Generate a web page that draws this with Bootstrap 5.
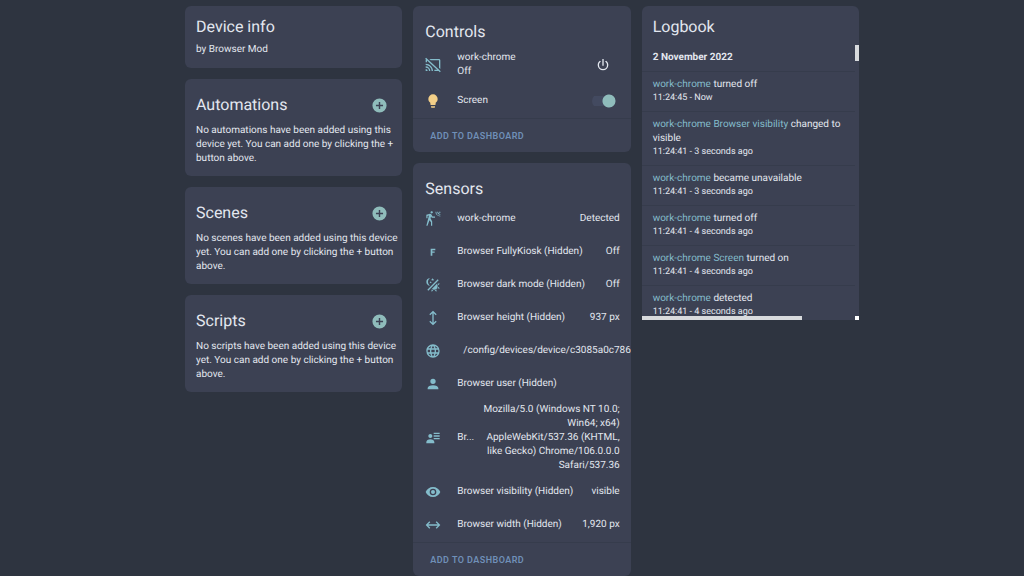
<!DOCTYPE html>
<html lang="en">
<head>
<meta charset="utf-8">
<meta name="viewport" content="width=device-width, initial-scale=1">
<title>Device info</title>
<link href="https://cdn.jsdelivr.net/npm/bootstrap@5.3.0/dist/css/bootstrap.min.css" rel="stylesheet">
<style>
  :root { --panel: #3c4153; --ink: #e3e7ef; --accent: #84bccb; --teal: #8fbcbb; --line: #363c4c; }
  body { background: #2e3440; color: var(--ink); font: 400 10px/14px Roboto, "Liberation Sans", sans-serif; text-rendering: geometricPrecision; }
  main { padding: 6px 0 0 20px; }
  .page { max-width: 674px; }
  .page > .row { --bs-gutter-x: 11px; --bs-gutter-y: 11px; }
  .stack { gap: 11px; }
  .panel { background: var(--panel); color: var(--ink); border: 0; border-radius: 6px; overflow: hidden; }
  .panel h2 { font-size: 16px; line-height: 20px; font-weight: 400; margin: 0; }
  .info { padding: 11px 12px 11px 11px; }
  .info p { margin: 6px 0 0; }
  .related { padding: 16px 3px 10px 11px; }
  .related p { margin: 9px 0 0; }
  .related header { padding-right: 11px; }
  .icon { width: 16px; height: 16px; flex: none; fill: currentColor; display: block; }
  .icon-btn { background: none; border: 0; padding: 0; color: inherit; }
  .add { color: var(--teal); }
  .add .icon { width: 17px; height: 17px; }
  .entities { padding: 16px 11px 3px 12px; }
  .entities h2 { margin-bottom: 6px; }
  .entities ul { gap: 5px; }
  .entities li { min-height: 28px; }
  .entities li.tall { min-height: 34px; }
  .entities li > .icon { color: var(--accent); margin-right: 16px; }
  .entities li > .lamp { color: #f3cf88; }
  .value { margin-left: 6px; white-space: nowrap; }
  .name { min-width: 0; }
  .agent { flex: 0 0 138px; white-space: normal; text-align: right; }
  .power { margin-right: 9px; }
  .form-switch.screen { min-height: 0; padding: 0; margin: 0 4px 0 0; }
  .form-switch.screen .form-check-input { width: 24px; height: 14px; margin: 0; float: none; border: 0; display: block; background-color: transparent;
    background-image: radial-gradient(circle at 17px 7px, var(--teal) 6px, transparent 7px), linear-gradient(#434a60, #434a60);
    background-size: 24px 14px, 18px 10px; background-position: 0 0, 0 2px; background-repeat: no-repeat; border-radius: 7px; }
  .actions { border-top: 1px solid var(--line); padding: 10px 17px 9px; }
  .actions button { color: #7090b8; font-size: 9px; font-weight: 600; line-height: 14px; letter-spacing: .05em; text-transform: uppercase; }
  .logbook { max-height: 314px; padding: 11px 0 0 0; }
  .logbook.panel { border-bottom-left-radius: 0; border-bottom-right-radius: 0; }
  .logbook h2, .logbook h3 { padding-left: 11px; }
  .logbook h3 { font-size: 10px; line-height: 14px; font-weight: 700; margin: 14px 0 6px; }
  .logbook li { border-top: 1px solid var(--line); padding: 6px 8px 6px 11px; margin-right: 4px; }
  .logbook a { color: var(--accent); text-decoration: none; }
  .logbook time { display: block; font-size: 9px; line-height: 13px; }
  .bar-x, .bar-y, .bar-end { position: absolute; background: #d8dadd; }
  .bar-x { left: 0; bottom: 0; width: 74%; height: 4px; }
  .bar-y { right: 0; top: 39px; width: 4px; height: 16px; }
  .bar-end { right: 0; bottom: 0; width: 4px; height: 4px; background: #fff; }
</style>
</head>
<body>
<svg width="0" height="0" class="d-none" aria-hidden="true">
  <symbol id="plus" viewBox="0 0 24 24"><path d="M17,13H13V17H11V13H7V11H11V7H13V11H17M12,2A10,10 0 0,0 2,12A10,10 0 0,0 12,22A10,10 0 0,0 22,12A10,10 0 0,0 12,2Z"/></symbol>
</svg>
<main>
<div class="page mx-auto">
  <div class="row">
    <div class="col-12 col-md-4 d-flex flex-column stack">
      <section class="card panel info">
        <h2>Device info</h2>
        <p>by Browser Mod</p>
      </section>
      <section class="card panel related">
        <header class="d-flex justify-content-between align-items-center"><h2>Automations</h2><button class="icon-btn add" type="button" aria-label="Add automation"><svg class="icon"><use href="#plus"/></svg></button></header>
        <p>No automations have been added using this device yet. You can add one by clicking the + button above.</p>
      </section>
      <section class="card panel related">
        <header class="d-flex justify-content-between align-items-center"><h2>Scenes</h2><button class="icon-btn add" type="button" aria-label="Add scene"><svg class="icon"><use href="#plus"/></svg></button></header>
        <p>No scenes have been added using this device yet. You can add one by clicking the + button above.</p>
      </section>
      <section class="card panel related">
        <header class="d-flex justify-content-between align-items-center"><h2>Scripts</h2><button class="icon-btn add" type="button" aria-label="Add script"><svg class="icon"><use href="#plus"/></svg></button></header>
        <p>No scripts have been added using this device yet. You can add one by clicking the + button above.</p>
      </section>
    </div>

    <div class="col-12 col-md-4 d-flex flex-column stack">
      <section class="card panel">
        <div class="entities">
          <h2>Controls</h2>
          <ul class="list-unstyled d-flex flex-column mb-0">
            <li class="d-flex align-items-center tall">
              <svg class="icon" viewBox="0 0 24 24"><path d="M1.6,1.27L0.25,2.75L1.41,3.8C1.16,4.13 1,4.55 1,5V8H3V5.23L18.2,19H14V21H20.41L22.31,22.72L23.65,21.24M6.5,3L8.7,5H21V16.14L23,17.95V5C23,3.89 22.1,3 21,3M1,10V12A9,9 0 0,1 10,21H12C12,14.92 7.08,10 1,10M1,14V16A5,5 0 0,1 6,21H8A7,7 0 0,0 1,14M1,18V21H4A3,3 0 0,0 1,18Z"/></svg>
              <div class="name flex-grow-1">work-chrome<br>Off</div>
              <button class="icon-btn power" type="button" aria-label="Turn on work-chrome"><svg class="icon" viewBox="0 0 24 24"><path d="M16.56,5.44L15.11,6.89C16.84,7.94 18,9.83 18,12A6,6 0 0,1 12,18A6,6 0 0,1 6,12C6,9.83 7.16,7.94 8.88,6.88L7.44,5.44C5.36,6.88 4,9.28 4,12A8,8 0 0,0 12,20A8,8 0 0,0 20,12C20,9.28 18.64,6.88 16.56,5.44M13,3H11V13H13"/></svg></button>
            </li>
            <li class="d-flex align-items-center">
              <svg class="icon lamp" viewBox="0 0 24 24"><path d="M12,2A7,7 0 0,0 5,9C5,11.38 6.19,13.47 8,14.74V17A1,1 0 0,0 9,18H15A1,1 0 0,0 16,17V14.74C17.81,13.47 19,11.38 19,9A7,7 0 0,0 12,2M9,21A1,1 0 0,0 10,22H14A1,1 0 0,0 15,21V20H9V21Z"/></svg>
              <label class="name flex-grow-1" for="screen">Screen</label>
              <div class="form-check form-switch screen"><input class="form-check-input" type="checkbox" role="switch" id="screen" checked></div>
            </li>
          </ul>
        </div>
        <div class="actions d-flex"><button class="icon-btn" type="button">Add to dashboard</button></div>
      </section>

      <section class="card panel">
        <div class="entities">
          <h2>Sensors</h2>
          <ul class="list-unstyled d-flex flex-column mb-0">
            <li class="d-flex align-items-center">
              <svg class="icon" viewBox="0 0 24 24"><path d="M10,0.2C9,0.2 8.2,1 8.2,2C8.2,3 9,3.8 10,3.8C11,3.8 11.8,3 11.8,2C11.8,1 11,0.2 10,0.2M15.67,1A7.33,7.33 0 0,0 23,8.33V7A6,6 0 0,1 17,1H15.67M18.33,1C18.33,3.58 20.42,5.67 23,5.67V4.33C21.16,4.33 19.67,2.84 19.67,1H18.33M21,1A2,2 0 0,0 23,3V1H21M7.92,4.03C7.75,4.03 7.58,4.06 7.42,4.11L2,5.8V11H3.8V7.33L5.91,6.67L2,22H3.8L6.67,13.89L9,17V22H10.8V15.59L8.31,11.05L9.04,8.18L10.12,10H15V8.2H11.38L9.38,4.87C9.08,4.37 8.54,4.03 7.92,4.03Z"/></svg>
              <span class="name text-truncate flex-grow-1">work-chrome</span><span class="value">Detected</span>
            </li>
            <li class="d-flex align-items-center">
              <svg class="icon" viewBox="0 0 24 24"><path d="M8.5,7V17.5H11V13.3H14.5V11.1H11V9.2H15.5V7Z"/></svg>
              <span class="name text-truncate flex-grow-1">Browser FullyKiosk (Hidden)</span><span class="value">Off</span>
            </li>
            <li class="d-flex align-items-center">
              <svg class="icon" viewBox="0 0 24 24"><path d="M7.5,2C5.71,3.15 4.5,5.18 4.5,7.5C4.5,9.82 5.71,11.85 7.53,13C4.46,13 2,10.54 2,7.5A5.5,5.5 0 0,1 7.5,2M19.07,3.5L20.5,4.93L4.93,20.5L3.5,19.07L19.07,3.5M12.89,5.93L11.41,5L9.97,6L10.39,4.3L9,3.24L10.75,3.12L11.33,1.47L12,3.1L13.73,3.13L12.38,4.26L12.89,5.93M9.59,9.54L8.43,8.81L7.31,9.59L7.65,8.27L6.56,7.44L7.92,7.35L8.37,6.06L8.88,7.33L10.24,7.36L9.19,8.23L9.59,9.54M19,13.5A5.5,5.5 0 0,1 13.5,19C12.28,19 11.15,18.6 10.24,17.93L17.93,10.24C18.6,11.15 19,12.28 19,13.5M14.6,20.08L17.37,18.93L17.13,22.28L14.6,20.08M18.93,17.38L20.08,14.61L22.28,17.15L18.93,17.38M20.08,12.42L18.94,9.64L22.28,9.88L20.08,12.42M9.63,18.93L12.4,20.08L9.87,22.27L9.63,18.93Z"/></svg>
              <span class="name text-truncate flex-grow-1">Browser dark mode (Hidden)</span><span class="value">Off</span>
            </li>
            <li class="d-flex align-items-center">
              <svg class="icon" viewBox="0 0 24 24"><path d="M12,1L17.5,6.5L16.1,7.9L13,4.8V19.2L16.1,16.1L17.5,17.5L12,23L6.5,17.5L7.9,16.1L11,19.2V4.8L7.9,7.9L6.5,6.5Z"/></svg>
              <span class="name text-truncate flex-grow-1">Browser height (Hidden)</span><span class="value">937 px</span>
            </li>
            <li class="d-flex align-items-center">
              <svg class="icon" viewBox="0 0 24 24"><path d="M16.36,14C16.44,13.34 16.5,12.68 16.5,12C16.5,11.32 16.44,10.66 16.36,10H19.74C19.9,10.64 20,11.31 20,12C20,12.69 19.9,13.36 19.74,14M14.59,19.56C15.19,18.45 15.65,17.25 15.97,16H18.92C17.96,17.65 16.43,18.93 14.59,19.56M14.34,14H9.66C9.56,13.34 9.5,12.68 9.5,12C9.5,11.32 9.56,10.65 9.66,10H14.34C14.43,10.65 14.5,11.32 14.5,12C14.5,12.68 14.43,13.34 14.34,14M12,19.96C11.17,18.76 10.5,17.43 10.09,16H13.91C13.5,17.43 12.83,18.76 12,19.96M8,8H5.08C6.03,6.34 7.57,5.06 9.4,4.44C8.8,5.55 8.35,6.75 8,8M5.08,16H8C8.35,17.25 8.8,18.45 9.4,19.56C7.57,18.93 6.03,17.65 5.08,16M4.26,14C4.1,13.36 4,12.69 4,12C4,11.31 4.1,10.64 4.26,10H7.64C7.56,10.66 7.5,11.32 7.5,12C7.5,12.68 7.56,13.34 7.64,14M12,4.03C12.83,5.23 13.5,6.57 13.91,8H10.09C10.5,6.57 11.17,5.23 12,4.03M18.92,8H15.97C15.65,6.75 15.19,5.55 14.59,4.44C16.43,5.07 17.96,6.34 18.92,8M12,2C6.47,2 2,6.5 2,12A10,10 0 0,0 12,22A10,10 0 0,0 22,12A10,10 0 0,0 12,2Z"/></svg>
              <span class="value">/config/devices/device/c3085a0c78619</span>
            </li>
            <li class="d-flex align-items-center">
              <svg class="icon" viewBox="0 0 24 24"><path d="M12,4A4,4 0 0,1 16,8A4,4 0 0,1 12,12A4,4 0 0,1 8,8A4,4 0 0,1 12,4M12,14C16.42,14 20,15.79 20,18V20H4V18C4,15.79 7.58,14 12,14Z"/></svg>
              <span class="name text-truncate flex-grow-1">Browser user (Hidden)</span>
            </li>
            <li class="d-flex align-items-center">
              <svg class="icon" viewBox="0 0 24 24"><path d="M11 9C11 10.66 9.66 12 8 12C6.34 12 5 10.66 5 9C5 7.34 6.34 6 8 6C9.66 6 11 7.34 11 9M14 20H2V18C2 15.79 4.69 14 8 14C11.31 14 14 15.79 14 18M22 12V14H13V12M22 8V10H13V8M22 4V6H13V4Z"/></svg>
              <span class="name flex-grow-1">Br...</span><span class="value agent">Mozilla/5.0 (Windows NT 10.0; Win64; x64) AppleWebKit/537.36 (KHTML, like Gecko) Chrome/106.0.0.0 Safari/537.36</span>
            </li>
            <li class="d-flex align-items-center">
              <svg class="icon" viewBox="0 0 24 24"><path d="M12,9A3,3 0 0,0 9,12A3,3 0 0,0 12,15A3,3 0 0,0 15,12A3,3 0 0,0 12,9M12,17A5,5 0 0,1 7,12A5,5 0 0,1 12,7A5,5 0 0,1 17,12A5,5 0 0,1 12,17M12,4.5C7,4.5 2.73,7.61 1,12C2.73,16.39 7,19.5 12,19.5C17,19.5 21.27,16.39 23,12C21.27,7.61 17,4.5 12,4.5Z"/></svg>
              <span class="name text-truncate flex-grow-1">Browser visibility (Hidden)</span><span class="value">visible</span>
            </li>
            <li class="d-flex align-items-center">
              <svg class="icon" viewBox="0 0 24 24"><path d="M1,12L6.5,6.5L7.9,7.9L4.8,11H19.2L16.1,7.9L17.5,6.5L23,12L17.5,17.5L16.1,16.1L19.2,13H4.8L7.9,16.1L6.5,17.5Z"/></svg>
              <span class="name text-truncate flex-grow-1">Browser width (Hidden)</span><span class="value">1,920 px</span>
            </li>
          </ul>
        </div>
        <div class="actions d-flex"><button class="icon-btn" type="button">Add to dashboard</button></div>
      </section>
    </div>

    <div class="col-12 col-md-4">
      <section class="card panel logbook">
        <h2>Logbook</h2>
        <h3>2 November 2022</h3>
        <ul class="list-unstyled mb-0">
          <li><a href="#">work-chrome</a> turned off<time>11:24:45 - Now</time></li>
          <li><a href="#">work-chrome Browser visibility</a> changed to visible<time>11:24:41 - 3 seconds ago</time></li>
          <li><a href="#">work-chrome</a> became unavailable<time>11:24:41 - 3 seconds ago</time></li>
          <li><a href="#">work-chrome</a> turned off<time>11:24:41 - 4 seconds ago</time></li>
          <li><a href="#">work-chrome Screen</a> turned on<time>11:24:41 - 4 seconds ago</time></li>
          <li><a href="#">work-chrome</a> detected<time>11:24:41 - 4 seconds ago</time></li>
        </ul>
        <span class="bar-y" aria-hidden="true"></span>
        <span class="bar-x" aria-hidden="true"></span>
        <span class="bar-end" aria-hidden="true"></span>
      </section>
    </div>
  </div>
</div>
</main>
<script src="https://cdn.jsdelivr.net/npm/bootstrap@5.3.0/dist/js/bootstrap.bundle.min.js"></script>
</body>
</html>
